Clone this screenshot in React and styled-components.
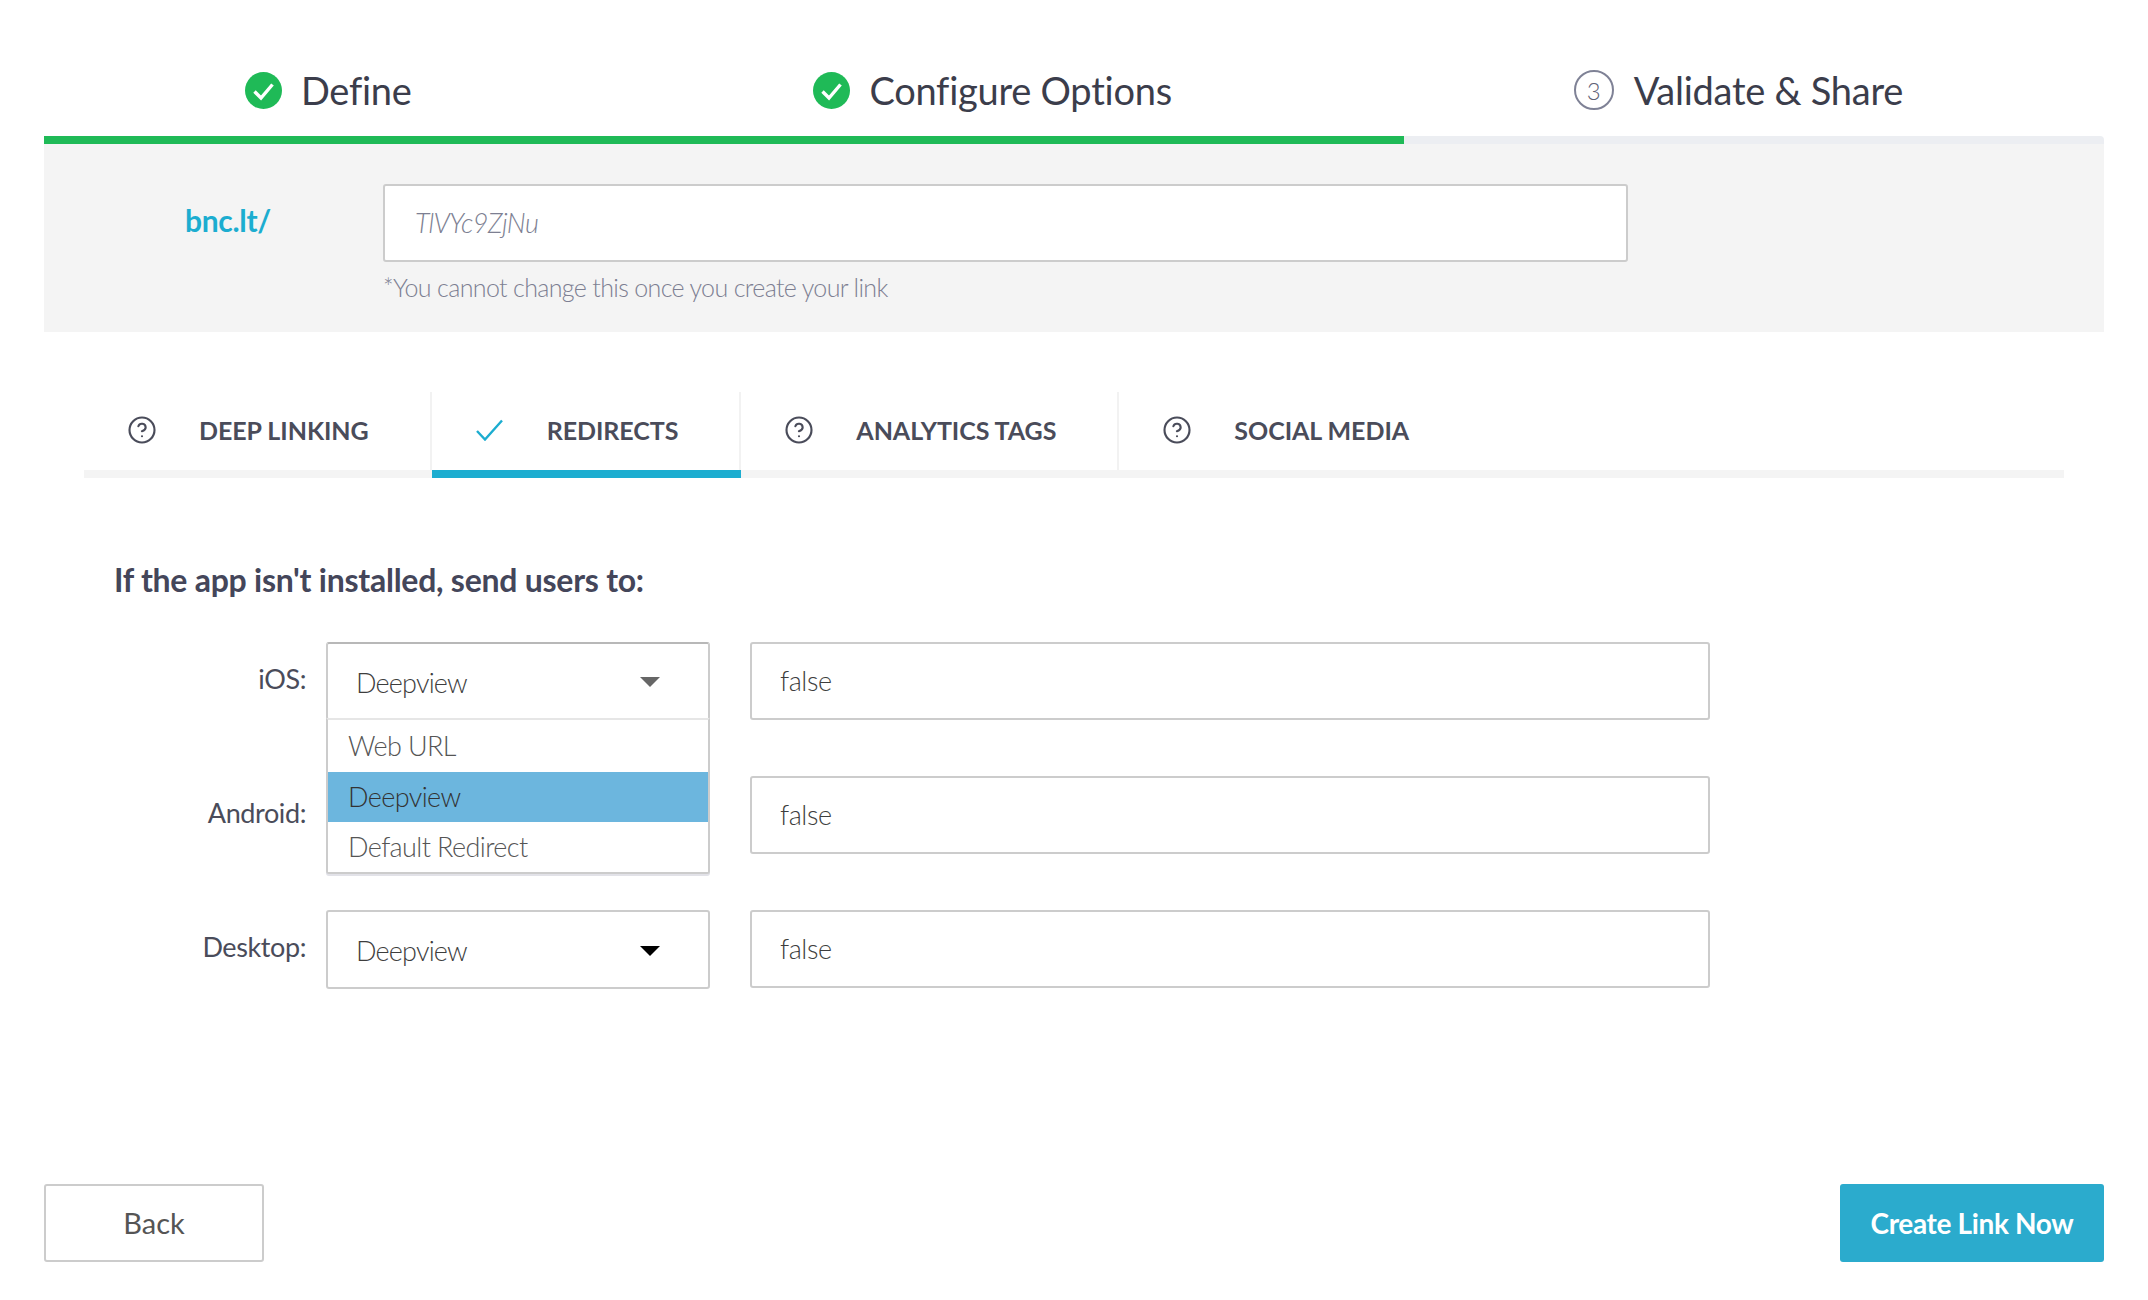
import React from 'react';
import styled, { createGlobalStyle } from 'styled-components';
import { CircleHelp } from 'lucide-react';

const GlobalStyle = createGlobalStyle`
html, body {
    margin: 0;
    padding: 0;
    background: #ffffff;
    font-family: "Lato", "Noto Sans", sans-serif;
}
* {
    box-sizing: border-box;
}
`

const Page = styled.div`
min-height: 1300px;
padding: 0 44px 38px;
display: flex;
flex-direction: column;
`
const Steps = styled.div`
height: 136px;
padding-top: 44px;
display: flex;
justify-content: space-around;
align-items: center;
`
const Step = styled.div`
display: flex;
align-items: center;
gap: ${props => props.$gap}px;
font-size: 38px;
color: #3b3d4b;
white-space: nowrap;
letter-spacing: -0.25px;
`
const NumberCircle = styled.span`
width: 40px;
height: 40px;
border: 2px solid #7f8296;
border-radius: 50%;
display: flex;
align-items: center;
justify-content: center;
font-size: 24px;
font-weight: 300;
color: #5f6276;
`
const Progress = styled.div`
height: 8px;
background: #eceef2;
border-radius: 0 4px 0 0;
`
const ProgressFill = styled.div`
height: 100%;
background: #1fba57;
`
const LinkPanel = styled.div`
height: 188px;
padding: 40px 0 0 141px;
background: #f4f4f4;
display: flex;
`
const Domain = styled.div`
width: 198px;
padding-top: 18px;
font-size: 30px;
font-weight: 700;
color: #1cadd0;
letter-spacing: -0.3px;
`
const AliasField = styled.div`
width: 1245px;
height: 78px;
padding: 0 0 2px 30px;
background: #ffffff;
border: 2px solid #cccccc;
border-radius: 3px;
display: flex;
align-items: center;
font-size: 27px;
font-style: italic;
font-weight: 300;
color: #7d7f92;
letter-spacing: -0.6px;
`
const Hint = styled.div`
margin-top: 10px;
font-size: 25px;
font-weight: 300;
color: #7d7f92;
letter-spacing: -0.65px;
`
const Tabs = styled.div`
margin: 60px 40px 0;
display: flex;
border-bottom: 8px solid #f4f4f4;
`
const Tab = styled.div`
position: relative;
height: 78px;
padding: 0 61px 2px 43px;
display: flex;
align-items: center;
gap: 42px;
font-size: 25px;
font-weight: 700;
color: #4a4c5a;
letter-spacing: -0.05px;
white-space: nowrap;
border-right: ${props => props.$divider ? '2px solid #f2f2f2' : 'none'};
${props => props.$active && `
&::after {
    content: "";
    position: absolute;
    left: 0;
    right: -2px;
    bottom: -8px;
    height: 8px;
    background: #1cadd0;
}
`}
`
const TabIcon = styled.span`
width: 30px;
height: 30px;
display: flex;
align-items: center;
justify-content: center;
color: #4a4c5a;
`
const Heading = styled.h2`
margin: 82px 0 0 70px;
font-size: 32px;
line-height: 40px;
font-weight: 700;
color: #44465a;
letter-spacing: -0.25px;
`
const Form = styled.div`
margin-top: 42px;
display: grid;
grid-template-columns: 282px 384px 1fr;
grid-auto-rows: 78px;
row-gap: 56px;
`
const RowLabel = styled.div`
padding: 0 20px 6px 0;
display: flex;
align-items: center;
justify-content: flex-end;
font-size: 27px;
color: #4a4c5a;
letter-spacing: -0.4px;
`
const SelectWrap = styled.div`
position: relative;
`
const SelectBox = styled.div`
height: ${props => props.$tall ? 79 : 78}px;
padding: 2px 48px 0 28px;
background: #ffffff;
border: 2px solid #cccccc;
border-top-color: ${props => props.$open ? '#b8b8b8' : '#cccccc'};
border-radius: 3px;
display: flex;
align-items: center;
justify-content: space-between;
font-size: 27px;
font-weight: 300;
color: #3d3d3d;
letter-spacing: -0.8px;
`
const Arrow = styled.span`
margin-left: auto;
width: 0;
height: 0;
border-left: 10px solid transparent;
border-right: 10px solid transparent;
border-top: 10px solid ${props => props.$open ? '#666666' : '#000000'};
`
const Menu = styled.div`
position: absolute;
z-index: 2;
top: 76px;
left: 0;
right: 0;
background: #ffffff;
border: 2px solid #cccccc;
border-top-color: #e6e6e6;
border-radius: 0 0 3px 3px;
box-shadow: 0 2px 0 #e2e2e8;
`
const Option = styled.div`
height: ${props => props.$height}px;
padding: 0 0 2px 20px;
display: flex;
align-items: center;
font-size: 27px;
font-weight: 300;
letter-spacing: -0.6px;
color: ${props => props.$selected ? '#333333' : '#555555'};
background: ${props => props.$selected ? '#6cb6de' : '#ffffff'};
`
const TextField = styled.div`
width: 960px;
height: 78px;
margin-left: 40px;
padding: 0 28px 2px;
border: 2px solid #cccccc;
border-radius: 3px;
display: flex;
align-items: center;
font-size: 27px;
font-weight: 300;
color: #3d3d3d;
letter-spacing: -0.4px;
`
const Footer = styled.div`
margin-top: auto;
display: flex;
justify-content: space-between;
`
const BackButton = styled.button`
width: 220px;
height: 78px;
padding: 0 0 2px;
background: #ffffff;
border: 2px solid #cccccc;
border-radius: 3px;
font-family: inherit;
font-size: 29px;
color: #555555;
`
const CreateButton = styled.button`
width: 264px;
height: 78px;
padding: 0;
background: #2babcd;
border: none;
border-radius: 3px;
font-family: inherit;
font-size: 28px;
font-weight: 700;
color: #ffffff;
letter-spacing: -0.35px;
`

const DoneIcon = () => (
    <svg width="37" height="37" viewBox="0 0 37 37">
        <circle cx="18.5" cy="18.5" r="18.5" fill="#1fba57" />
        <path d="M9.5 19.5 L16 26 L27.5 12.5" fill="none" stroke="#ffffff" strokeWidth="3.4" />
    </svg>
)

const TabCheck = () => (
    <svg width="28" height="22" viewBox="0 0 28 22">
        <path d="M1 12 L9 20.5 L26 1.5" fill="none" stroke="#1cadd0" strokeWidth="2.4" />
    </svg>
)

const tabs = [
    { name: 'DEEP LINKING', divider: true },
    { name: 'REDIRECTS', divider: true, active: true },
    { name: 'ANALYTICS TAGS', divider: true },
    { name: 'SOCIAL MEDIA' },
]

// the Android select sits behind the open iOS menu, so it shows no value
const rows = [
    { label: 'iOS', value: 'Deepview', open: true },
    { label: 'Android' },
    { label: 'Desktop', value: 'Deepview', tall: true },
]

const App = () => {
    return (
        <Page>
            <GlobalStyle />
            <Steps>
                <Step $gap={19}><DoneIcon />Define</Step>
                <Step $gap={19}><DoneIcon />Configure Options</Step>
                <Step $gap={20}><NumberCircle>3</NumberCircle>Validate &amp; Share</Step>
            </Steps>
            <Progress>
                <ProgressFill style={{ width: `${1360 / 2060 * 100}%` }} />
            </Progress>
            <LinkPanel>
                <Domain>bnc.lt/</Domain>
                <div>
                    <AliasField>TlVYc9ZjNu</AliasField>
                    <Hint>*You cannot change this once you create your link</Hint>
                </div>
            </LinkPanel>
            <Tabs>
                {tabs.map(tab => (
                    <Tab key={tab.name} $divider={tab.divider} $active={tab.active}>
                        <TabIcon>
                            {tab.active ? <TabCheck /> : <CircleHelp size={34} strokeWidth={1.7} />}
                        </TabIcon>
                        {tab.name}
                    </Tab>
                ))}
            </Tabs>
            <Heading>If the app isn't installed, send users to:</Heading>
            <Form>
                {rows.map(row => (
                    <React.Fragment key={row.label}>
                        <RowLabel>{row.label}:</RowLabel>
                        <SelectWrap>
                            <SelectBox $open={row.open} $tall={row.tall}>
                                {row.value}
                                <Arrow $open={row.open} />
                            </SelectBox>
                            {row.open && (
                                <Menu>
                                    <Option $height={52}>Web URL</Option>
                                    <Option $height={50} $selected>Deepview</Option>
                                    <Option $height={50}>Default Redirect</Option>
                                </Menu>
                            )}
                        </SelectWrap>
                        <TextField>false</TextField>
                    </React.Fragment>
                ))}
            </Form>
            <Footer>
                <BackButton>Back</BackButton>
                <CreateButton>Create Link Now</CreateButton>
            </Footer>
        </Page>
    );
};

export default App;
